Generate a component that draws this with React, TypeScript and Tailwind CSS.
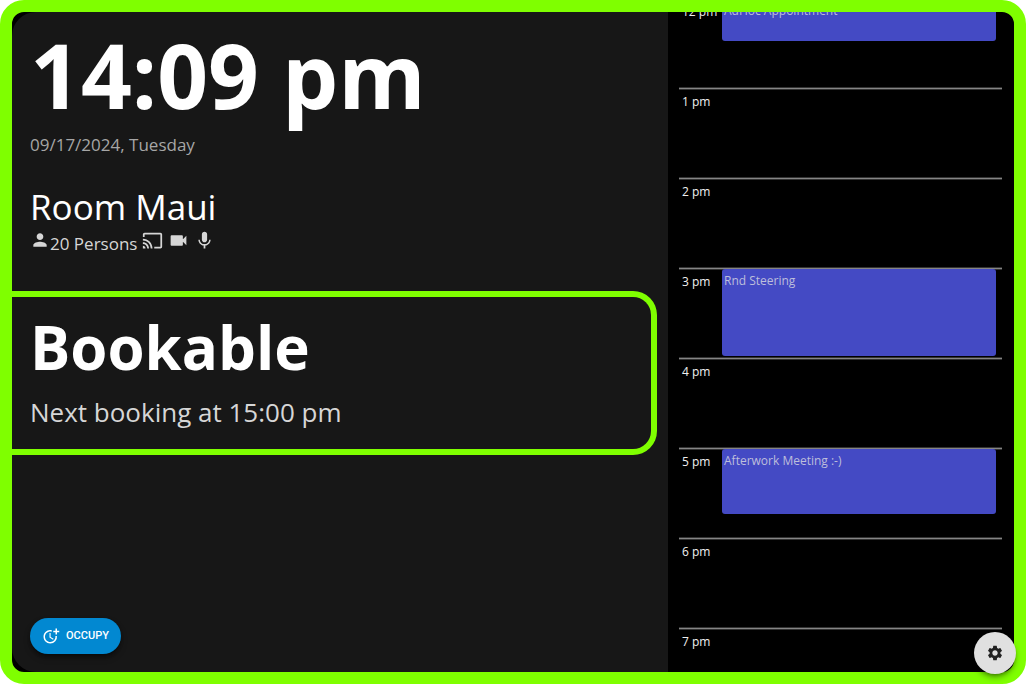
import { MdCast, MdMic, MdMoreTime, MdPerson, MdSettings, MdVideocam } from "react-icons/md";

type Slot = { hour: string; title?: string; minutes?: number };

const slots: Slot[] = [
  { hour: "12 pm", title: "AdHoc Appointment", minutes: 30 },
  { hour: "1 pm" },
  { hour: "2 pm" },
  { hour: "3 pm", title: "Rnd Steering", minutes: 60 },
  { hour: "4 pm" },
  { hour: "5 pm", title: "Afterwork Meeting :-)", minutes: 45 },
  { hour: "6 pm" },
  { hour: "7 pm" },
];

function HourRow({ hour, title, minutes = 0 }: Slot) {
  return (
    <li className="flex h-[90px] shrink-0 border-t border-[#858585] pr-1.5 shadow-[0_-1px_0_#333333,inset_0_1px_0_#333333]">
      <span className="w-[43px] shrink-0 pt-[3px] pl-[3px] text-xs leading-5 text-[#f0f0f0]">{hour}</span>
      {title && (
        <div
          className="min-w-0 flex-1 rounded-[3px] bg-[#444ac4] pl-0.5 text-xs leading-6 text-[#bdbedb]"
          style={{ height: Math.round(minutes * 1.5) - 3 }}
        >
          {title}
        </div>
      )}
    </li>
  );
}

export default function App() {
  return (
    <div className="h-screen bg-white font-['Open_Sans','Noto_Sans',sans-serif]">
      <div className="flex h-full overflow-hidden rounded-3xl border-12 border-[#7fff00] bg-black">
        <main className="flex min-w-0 flex-1 flex-col rounded-l-3xl bg-[#171717] pb-[18px]">
          <header className="px-[18px] pt-[13px]">
            <h1 className="text-[89px] leading-[100px] font-bold text-white">14:09 pm</h1>
            <p className="mt-2 text-[17px] leading-6 text-[#a6a6a6]">09/17/2024, Tuesday</p>
          </header>
          <section className="mt-[27px] px-[18px]">
            <h2 className="text-[35px] leading-[46px] text-white">Room Maui</h2>
            <div className="flex gap-[5px] text-[#d6d6d6]">
              <span className="flex text-[17px] leading-7">
                <MdPerson size={20} />
                20 Persons
              </span>
              <MdCast size={21} />
              <MdVideocam size={21} />
              <MdMic size={21} />
            </div>
          </section>
          <section className="mt-[33px] mr-[11px] rounded-r-3xl border-y-6 border-r-6 border-[#7fff00] px-[18px] pt-2.5 pb-[19px]">
            <h2 className="text-[60px] leading-[80px] font-bold text-white">Bookable</h2>
            <p className="mt-[7px] text-[26px] leading-9 text-[#d6d6d6]">Next booking at 15:00 pm</p>
          </section>
          <button
            type="button"
            className="mt-auto ml-[18px] flex h-9 items-center gap-1.5 self-start rounded-full bg-[#0288d1] px-3 font-['Roboto',sans-serif] text-[11px] font-medium text-white shadow-md shadow-black/50"
          >
            <MdMoreTime size={18} />
            OCCUPY
          </button>
        </main>
        <aside className="w-[346px] shrink-0 overflow-hidden pr-3 pl-[11px]">
          <ol className="-mt-3.5">
            {slots.map((slot) => (
              <HourRow key={slot.hour} {...slot} />
            ))}
          </ol>
        </aside>
      </div>
      <button
        type="button"
        aria-label="Settings"
        className="fixed right-2.5 bottom-2.5 flex size-[42px] items-center justify-center rounded-full bg-[#e0e0e0] text-[#212121] shadow-md shadow-black/40"
      >
        <MdSettings size={18} />
      </button>
    </div>
  );
}
